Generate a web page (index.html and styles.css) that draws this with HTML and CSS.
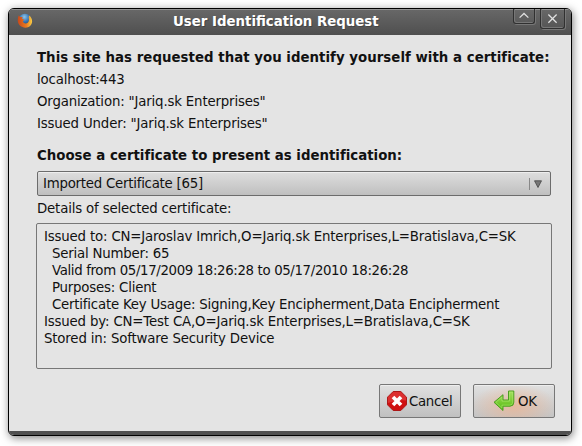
FILE: index.html
```html
<!DOCTYPE html>
<html lang="en">
<head>
<meta charset="utf-8">
<title>User Identification Request</title>
<link rel="stylesheet" href="styles.css">
</head>
<body>
<main class="window">
  <header class="titlebar">
    <svg class="app-icon" viewBox="0 0 16 16">
      <defs>
        <radialGradient id="globe" cx=".45" cy=".25" r=".7"><stop offset="0" stop-color="#8fc4e8"/><stop offset=".5" stop-color="#3a78b5"/><stop offset="1" stop-color="#16335f"/></radialGradient>
        <linearGradient id="fox" x1="0" y1="0" x2="1" y2="0"><stop offset="0" stop-color="#c9481a"/><stop offset=".6" stop-color="#e87a20"/><stop offset="1" stop-color="#f8ce45"/></linearGradient>
      </defs>
      <circle cx="8" cy="7.2" r="6.5" fill="url(#globe)"/>
      <path d="M1.7 2.6 3.3 4.1 5.7 4 5 5.7 7.4 6.8 5.8 8.3C6.6 11.5 11.5 11 11.9 7.5 12.1 5 11.2 4 12.3 2.4 16.5 6 15.8 12 11.6 14 6.8 16 .9 13.2.8 7.8.7 5.7 1 4 1.7 2.6Z" fill="url(#fox)"/>
    </svg>
    <h1 class="title">User Identification Request</h1>
    <div class="controls">
      <div class="control shade"><svg viewBox="0 0 22 15"><path d="M6.2 9.3 11 4.7l4.8 4.6"/></svg></div>
      <div class="control close"><svg viewBox="0 0 25 20"><path d="M8 5.6 17 14.6M17 5.6 8 14.6"/></svg></div>
    </div>
  </header>
  <section class="content">
    <p class="line heading request">This site has requested that you identify yourself with a certificate:</p>
    <p class="line">localhost:443</p>
    <p class="line">Organization: "Jariq.sk Enterprises"</p>
    <p class="line">Issued Under: "Jariq.sk Enterprises"</p>
    <p class="line heading choose">Choose a certificate to present as identification:</p>
    <div class="select"><span>Imported Certificate [65]</span><svg class="arrow" viewBox="0 0 14 14"><path d="M.5 1v12" stroke="#888"/><path d="M5.5 3.8h7L9 10.5z" fill="#777" stroke="#444" stroke-width=".8"/></svg></div>
    <p class="line details-label">Details of selected certificate:</p>
    <div class="details">
      <p>Issued to: CN=Jaroslav Imrich,O=Jariq.sk Enterprises,L=Bratislava,C=SK</p>
      <p class="sub">Serial Number: 65</p>
      <p class="sub validity">Valid from 05/17/2009 18:26:28 to 05/17/2010 18:26:28</p>
      <p class="sub">Purposes: Client</p>
      <p class="sub">Certificate Key Usage: Signing,Key Encipherment,Data Encipherment</p>
      <p>Issued by: CN=Test CA,O=Jariq.sk Enterprises,L=Bratislava,C=SK</p>
      <p>Stored in: Software Security Device</p>
    </div>
    <div class="actions">
      <button class="button cancel"><svg viewBox="0 0 20 20"><path d="M6.2.5h7.6l5.7 5.7v7.6l-5.7 5.7H6.2L.5 13.8V6.2z" fill="#cf1010" stroke="#ab1717"/><path d="M6.3.9h7.4l5.4 5.4v3.2Q10 8.5.9 12V6.3z" fill="#ef6262" opacity=".4"/><path d="m6 6 8 8M14 6l-8 8" stroke="#fff" stroke-width="3.7"/></svg><span>Cancel</span></button>
      <button class="button ok"><svg viewBox="0 0 22 22"><defs><linearGradient id="green" x1="0" y1="0" x2="0" y2="1"><stop offset="0" stop-color="#a5e060"/><stop offset="1" stop-color="#54bb10"/></linearGradient></defs><path d="M15.5 1h5.3v11.2q0 4-3.8 4h-7v4.3L1 12.3l9-7.6V10h5.5z" fill="url(#green)" stroke="#4a9e20"/><path d="M16.6 2.1h3.1v10q0 3-2.8 3H8.9v3L2.8 12.3l6.1-5.1v3.9h7.7z" fill="none" stroke="#b5ec78" stroke-width=".7" opacity=".7"/></svg><span>OK</span></button>
    </div>
  </section>
  <footer class="bottom-edge"></footer>
</main>
</body>
</html>
```
FILE: styles.css
```css
* { box-sizing: border-box; }
body {
  margin: 0;
  padding: 8px;
  height: 446px;
  overflow: hidden;
  background: #fff;
  color: #111;
  font: 13.33px/17px "DejaVu Sans", sans-serif;
  letter-spacing: -.17px;
}
p, h1 { margin: 0; white-space: nowrap; }
svg { display: block; flex: none; }
.window {
  display: flex;
  flex-direction: column;
  width: 564px;
  height: 428px;
  overflow: hidden;
  border: 1px solid #000;
  border-radius: 6px;
  background: #e4e4e4;
  box-shadow: 1px 2px 8px rgba(0, 0, 0, .5);
}
.titlebar {
  display: flex;
  height: 26px;
  flex: none;
  background: linear-gradient(#686868, #4f4f4f);
  box-shadow: inset 0 1px #959595;
}
.app-icon { width: 16px; height: 16px; margin: 4px 0 0 8px; }
.title {
  flex: 1;
  padding-left: 140px;
  color: #fff;
  font-size: 13.33px;
  letter-spacing: 0;
  line-height: 26px;
  text-shadow: 1px 1px #444;
}
.controls { display: flex; gap: 5px; margin-right: 6px; }
.control {
  border: 1px solid #303030;
  border-top: 0;
  border-radius: 0 0 3px 3px;
  box-shadow: inset 1px -1px #777, 1px 1px #777;
}
.control svg { width: 100%; height: 100%; fill: none; stroke: #e0e0e0; stroke-width: 1.4; }
.shade { width: 22px; height: 15px; }
.close { width: 25px; height: 20px; }
.content { flex: 1; padding: 12px 20px 0 27px; }
.line { height: 22px; padding-left: 1px; line-height: 22px; }
.heading { font-weight: bold; letter-spacing: .03px; }
.choose { margin-top: 10px; letter-spacing: .01px; }
.select {
  display: flex;
  justify-content: space-between;
  align-items: center;
  width: 514px;
  height: 25px;
  margin: 4px 0 0 1px;
  padding: 0 7px 0 5px;
  border: 1px solid #6c6c6c;
  border-radius: 2px;
  background: linear-gradient(#dedede, #bfbfbf);
  box-shadow: inset 0 1px #eee;
  letter-spacing: -.24px;
}
.arrow { width: 14px; height: 14px; fill: none; }
.details-label { height: 27px; line-height: 25px; }
.details {
  width: 516px;
  height: 146px;
  padding: 4px 7px;
  border: 1px solid #777;
  border-radius: 2px;
}
.sub { padding-left: 8px; letter-spacing: -.21px; }
.validity { letter-spacing: -.36px; }
.actions { display: flex; gap: 12px; width: 519px; margin-top: 15px; justify-content: flex-end; }
.button {
  display: flex;
  align-items: center;
  flex: none;
  width: 82px;
  height: 34px;
  padding: 0;
  border: 1px solid #777;
  border-radius: 2px;
  background: linear-gradient(#e0e0e0, #c0c0c0);
  box-shadow: inset 0 1px #eee;
  color: #111;
  font: inherit;
  letter-spacing: -.3px;
}
.cancel { padding-left: 7px; gap: 2px; }
.cancel svg { width: 20px; height: 20px; }
.ok {
  padding-left: 19px;
  gap: 3px;
  background: radial-gradient(ellipse at 50% 65%, rgba(238, 178, 142, .75), rgba(235, 178, 145, 0) 75%), linear-gradient(#e0e0e0, #c4c4c4);
}
.ok svg { width: 22px; height: 22px; }
.bottom-edge { height: 4px; flex: none; background: #505050; }
```
